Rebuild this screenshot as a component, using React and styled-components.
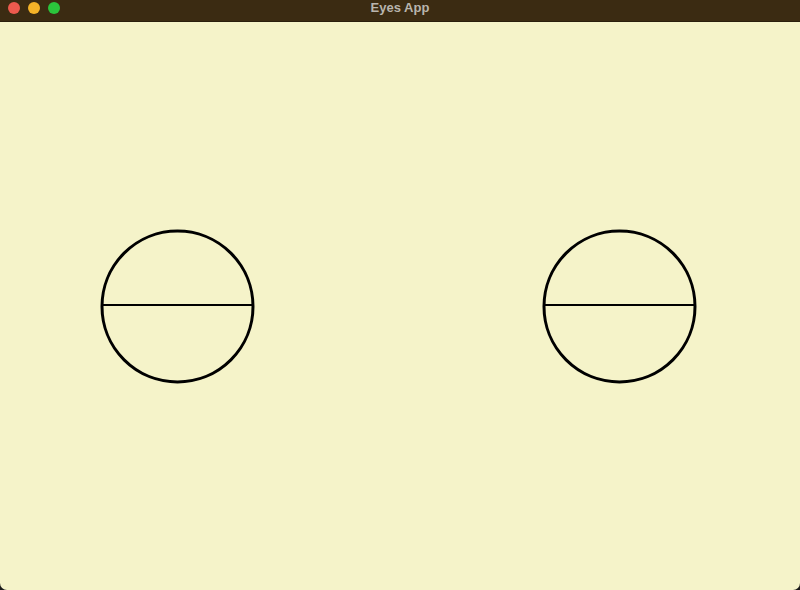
import React from "react";
import styled, { createGlobalStyle } from "styled-components";

const Global = createGlobalStyle`
  html, body { margin: 0; padding: 0; background: #1a1a1a; }
  body { font-family: "Liberation Sans", Arial, sans-serif; }
`;

const Window = styled.div`
  width: 800px;
  height: 590px;
  display: flex;
  flex-direction: column;
  border-radius: 0 0 7px 7px;
  overflow: hidden;
  background: #f5f3c9;
`;

const TitleBar = styled.div`
  height: 22px;
  flex: 0 0 22px;
  background: #3b2b12;
  position: relative;
  display: flex;
  align-items: center;
  justify-content: center;
  border-bottom: 1px solid #2a1e0c;
  box-sizing: border-box;
`;

const Lights = styled.div`
  position: absolute;
  left: 8px;
  top: 2px;
  display: flex;
  gap: 8px;
`;

const Light = styled.span`
  width: 12px;
  height: 12px;
  border-radius: 50%;
  background: ${(p) => p.$color};
`;

const Title = styled.div`
  color: #b9b5ad;
  font-size: 13px;
  font-weight: bold;
  margin-top: -7px;
`;

const Stage = styled.div`
  flex: 1;
  display: flex;
  align-items: center;
  justify-content: space-between;
  padding: 0 103px 0 100px;
`;

const EyeSvg = styled.svg`
  display: block;
  width: 155px;
  height: 155px;
`;

function Eye() {
  return (
    <EyeSvg viewBox="0 0 155 155">
      <circle cx="77.5" cy="77.5" r="75.5" fill="none" stroke="#000" strokeWidth="3" />
      <line x1="2" y1="76" x2="153" y2="76" stroke="#000" strokeWidth="2" />
    </EyeSvg>
  );
}

export default function App() {
  return (
    <>
      <Global />
      <Window>
        <TitleBar>
          <Lights>
            <Light $color="#ed5a4e" />
            <Light $color="#f5b328" />
            <Light $color="#2bc43c" />
          </Lights>
          <Title>Eyes App</Title>
        </TitleBar>
        <Stage>
          <Eye />
          <Eye />
        </Stage>
      </Window>
    </>
  );
}
